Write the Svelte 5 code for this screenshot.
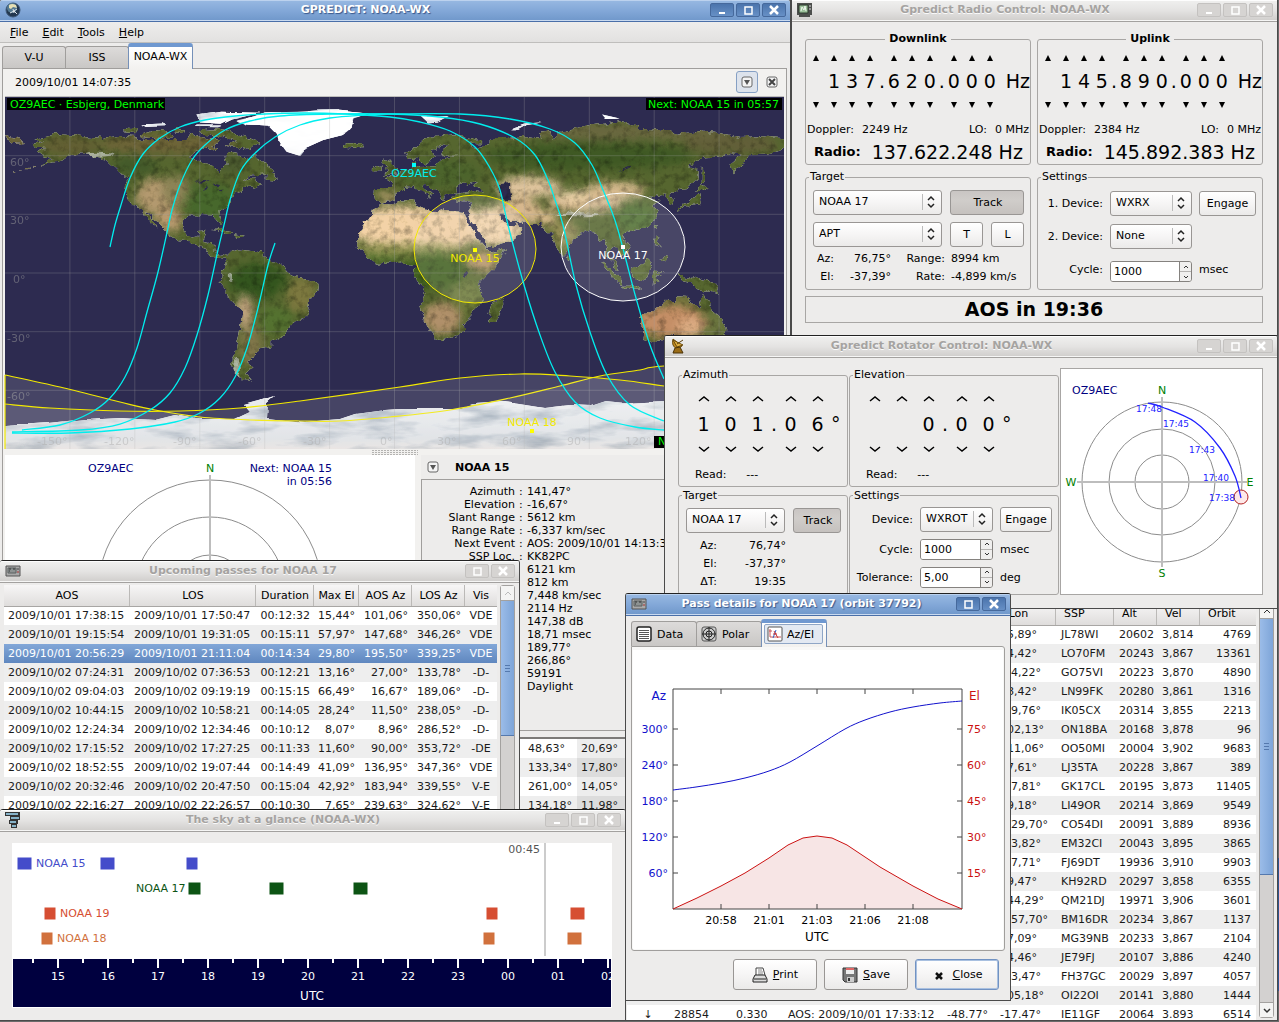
<script>
  // map canvas size, whole world in plain lat/lon projection
  const mapWidth = 779;
  const mapHeight = 352;

  const px = (lon) => Math.round((lon + 180) * (mapWidth / 360) * 10) / 10;
  const py = (lat) => Math.round((90 - lat) * (mapHeight / 180) * 10) / 10;

  const toPairs = (text) => text.trim().split(" ").map((p) => p.split(",").map(Number));

  const outline = (text) =>
    "M" + toPairs(text).map(([lon, lat]) => `${px(lon)} ${py(lat)}`).join("L") + "Z";

  // smooth line through all points
  const curve = (text) => {
    const p = toPairs(text);
    let d = `M${p[0][0]} ${p[0][1]}`;
    for (let i = 0; i < p.length - 1; i++) {
      const a = p[i - 1] || p[i];
      const b = p[i];
      const c = p[i + 1];
      const e = p[i + 2] || c;
      d += `C${b[0] + (c[0] - a[0]) / 6} ${b[1] + (c[1] - a[1]) / 6} `;
      d += `${c[0] - (e[0] - b[0]) / 6} ${c[1] - (e[1] - b[1]) / 6} ${c[0]} ${c[1]}`;
    }
    return d;
  };

  const land = [
    // north america
    "-168,66 -162,67 -166,68.5 -156,71 -150,70.5 -141,69.7 -135,69 -128,70 -120,69.5 -115,68 -108,68 -101,68 -96,68 -94,72 -90,69 -86,68 -81,69 -82,66 -87,64.5 -93,62 -95,59 -92,57 -85,55.5 -82,53 -80,51.2 -79,54 -77,56 -78,60 -77,62.4 -72,61.3 -70,58.5 -66,58.8 -64.5,60.3 -62,57 -57,54 -56,52 -60,50.2 -66,50 -70,47 -65,49 -64.5,46.5 -61,45.5 -66,43.6 -70,43.5 -70.5,41.7 -74,40.5 -76,37 -75.7,35.2 -78,34 -81,31.5 -80.2,27 -80.5,25.2 -82.5,28 -84,30 -89,30.2 -91,29 -95,29 -97.3,27 -97.7,22.5 -96,19 -94,18 -91,18.7 -90.5,21 -87,21.4 -88,17 -88.5,15.8 -83.2,15 -83.7,11 -82,9 -79.5,9.5 -77.4,8.6 -78,7.3 -80,7.4 -83,8.3 -85.8,10 -87.7,13 -92,14.5 -95,16 -100,17 -105,20 -105.5,22 -109,25.5 -112.5,29.5 -114.8,31.7 -114.5,30.5 -112,27.5 -109.5,23 -112,24.8 -115,28 -117,32.5 -120.5,34.5 -123.5,38.5 -124.3,42 -124,46.5 -123,49 -127.5,51.5 -130.5,55 -134,58.5 -140,60 -147,61 -151.5,59.5 -154,57.5 -158,56.5 -163,54.8 -158,58.5 -162,59 -165,61.5 -161,64 -166,64.6",
    "-117,71 -110,73 -105,72 -102,69.5 -110,68.7 -116,69.5",
    "-125,72 -123,74.3 -119,74 -120,71.6",
    "-90,73 -80,73.7 -72,71 -67,69 -62,66.5 -65,64.5 -67,62.8 -72,64.5 -78,65 -73,67.5 -80,70 -88,70.5",
    "-86,65.8 -81,64 -85,63.2",
    "-101,73.5 -97,73.5 -97,71.5 -101,72",
    "-59,51.5 -55.5,51 -53,47 -59,47.7",
    "-85,22 -80,23 -74.5,20.2 -77.5,20 -82,22.4",
    "-74,19.8 -69,19 -71,17.8 -74,18.3",
    // south america
    "-77.4,8.6 -75,11 -72,12 -68,11.5 -62,10.6 -57,6 -52,5 -50,0.5 -44,-2.5 -38,-4 -35,-6 -35.2,-9 -39,-14 -39.5,-20 -42,-23 -48,-26 -49,-29 -53.5,-34 -57,-35 -57,-38 -62,-39 -65,-42 -67,-46 -66,-48.5 -69,-51.5 -68,-53 -66,-55 -70,-55 -74,-51 -75.5,-47 -73.5,-41 -73,-37 -71.5,-30 -70.3,-19 -76,-14 -79,-8 -81,-5 -80,-3 -80,0 -77.5,4 -78,7.3",
    // africa
    "-6,35.8 -2,35 3,37 10,37.2 11,34 15,32.2 20,31 22,33 25,31.7 32,31.2 32.5,29.8 34,26.5 37,21.5 38,18 43,12 44.5,10.5 51,12 50.5,10 47,4 42,-1.5 39,-5 40.5,-11 40,-16 35,-20 35,-24 32.5,-26 32,-29 28,-33 22,-34.3 18.5,-34 18,-31.5 15,-27 13.5,-22 12,-17 13.8,-11 12,-5.5 9,-1 9.7,3.5 6,4.3 4,6.3 -2,5 -8,4.4 -13,8.5 -16.5,12.5 -17.3,14.7 -16.3,20 -14,26 -10,29.5 -9.5,32.5",
    "49.3,-12 50.3,-16 47,-25 44,-25 43.5,-21.5 44.5,-16.5 47,-15",
    // europe and asia
    "-9,43.5 -1.5,43.5 -1,46 -4.5,48.3 -1.5,49.5 3,51 5,53 8.5,54 8.2,57 10.5,57.5 10,55 12,54.2 19,54.4 21.5,57.5 24,59 30,60 23,60 21.5,62 25,65 22,65.8 17.5,62 18.5,60 16.5,57 14.5,55.6 12.5,56.5 11,59 7,58 5,61 10,64 14,68 20,70 28,71 33,69.5 41,67.5 40,66.2 34,66.7 37,64 44,66 44,68.5 53,68.5 60,69.5 68,68.5 67,72 72,73 73,68 76,72 80,73 87,75 98,76.5 105,77.7 113,75.5 113,73.7 127,73 130,71 140,72.5 150,71.5 160,69.5 170,69.8 182,68.8 182,65 178,62.5 170,60 163.5,59.8 162,56 156.7,51 155.8,56.5 160,60.5 156,61.7 150,59.5 142,59 135.5,54.7 140.5,53 140.5,48 135,43.3 131,43 127.7,40 129.3,36.5 126.5,34.5 126.5,37.5 125,39.7 121.5,39 121.5,40.8 118,39 122,37 119.5,35 121.5,32 121.8,29 119,25.5 114,22.3 110,21 108,21.5 105.8,19 109,13 107,10.5 105,8.7 104.8,10.5 102.3,12.3 100.8,13.3 99.3,10 100.5,7 103.3,3.5 104,1.4 101.5,2.8 100,6.5 98.5,9 98.5,13 97.3,17 94.3,16 94,19 91.5,22.7 88,21.8 86.5,20 82,16.5 80.2,15 80,12 79.5,10.3 77.5,8 76,11 74.5,14.5 72.8,19 72.5,21 70.5,20.8 69,22.5 67,25 61.5,25.1 57,26.8 54,26.6 50.5,30 48,30 50,27 51.5,25 54.3,24.2 56.3,26 56.8,24 59.8,22.4 57.5,19 55,17 52,15.6 45,12.8 43,13 42.5,16.5 39,21.5 35,28 34.5,29.5 34.3,31.4 36,36.2 32,36.2 28,36.7 26.5,39.2 29,41 35,42 41.5,41.3 37,45 39,47 35.5,46.3 33,44.6 33,46.2 30.7,46.3 28,43.5 28.5,41.3 24,40.8 22.7,39.5 24,38 22.5,36.5 21,38.5 19.4,41.8 15,44.5 13.5,45.6 12.4,44.5 14,42.5 18.3,40 16.5,39.7 16,38 15.5,40 12,42 9,44.3 6,43.2 3,43 0,39.8 -0.5,38 -2,36.8 -5.5,36.1 -9,37 -9.3,39",
    "-24,65.5 -22,66.3 -16,66.3 -14,65 -18.5,63.5 -22.5,64",
    "-5,58.5 -2,57.5 0,53 1.5,52.5 1,51 -5,50 -3,51.5 -4.5,53 -3,54.5 -5.5,56",
    "-10,52 -6,52 -6,54.5 -8,55.2 -10,54",
    "130,31.5 131,34 136,35.7 140,40 141.3,41.3 142,39.5 140.8,35.7 137,34.6 135.5,33.6 132,33.5",
    "140,42 141.8,45.3 145,43.8 143,42",
    "142,46 142,54 143.5,51 143.5,47",
    "80,9.5 81.8,7 80.5,6 79.8,7.5",
    "95.5,5.5 98,4 104,-2 106,-5.8 102,-4 98.5,1.5",
    "105.5,-6.5 111,-6.5 114.5,-8 110,-8 106,-7.4",
    "109,1.5 113,3 117,7 119,5 117.7,1 116,-3.8 113,-3.3 110,-1.5",
    "119.5,-5.5 119,-2 120,1 125,1.5 121,0.3 123,-1 121.5,-2 122.5,-5 120.5,-3",
    "120.5,18.5 122,18 121.5,14 124,12.6 121,13.6 120,16",
    "122,7 125.5,9.7 126.4,7 125,6",
    "120.3,23.5 121.7,25 121,22",
    "131,-1 134,-1 135,-3.3 138,-1.8 144.5,-3.8 148,-6.5 150.5,-10.5 146.5,-9 143,-9 139,-8 137.7,-5.3 133,-4",
    "114,-22 114,-26 115.5,-31 115,-34.2 118,-35 124,-33.7 129,-31.6 134,-32.8 136,-34.8 138,-33 138.3,-35.5 140.5,-38 146.5,-39 150,-37.3 153,-32 153.4,-28 150.8,-23.3 146.3,-19 145.3,-15 142.5,-10.7 141.5,-14 140.8,-17.5 137,-16 135.7,-12.2 131,-12 129.5,-15 126,-14 122,-18 117,-20.7",
  ].map(outline);

  const ice = [
    "-73,78 -68,76 -58,75.5 -54,71 -53,67 -50,62 -44,60 -41,64 -33,68 -24,70.5 -20,74 -19,79 -12,81.5 -30,83.5 -45,82.5 -60,82 -65,80",
    "-90,77 -92,81 -80,83 -62,82.5 -75,79 -80,76.3",
    "-92,75.5 -80,75.5 -82,74.5 -92,74.8",
    "-117,76 -107,76.5 -106,75 -115,74.8",
    "12,80 25,80.3 20,77.5 15,77",
    "54,73 56,73 60,75.5 68,77 60,76.4 55,74.4",
    "96,81 104,79 98,78.5",
  ].map(outline);

  const lakes = [
    "49,46 53,46.5 53,42 54,37 50,37.5 49.5,41 47.5,43",
    "-92,46.8 -88,48.5 -85,46.6",
    "-88,42 -87,45.5 -86,43",
    "-84,45.8 -80.5,45 -82,43.2",
    "-83,41.6 -79,42.8 -80,42",
    "32,0.5 34,0.3 33.5,-2.5 32,-2",
    "104,51.8 109,55 108,53",
  ].map(outline);

  // lon, lat, half width and half height in degrees, colour
  const terrain = [
    [-105, 66, 32, 5, "#6d6438"],
    [-150, 65, 14, 5, "#625f33"],
    [-85, 36, 12, 10, "#47682c"],
    [-110, 39, 9, 9, "#b3996f"],
    [-104, 27, 6, 6, "#b89a70"],
    [-101, 42, 6, 8, "#8d8457"],
    [-120, 55, 10, 5, "#435a2a"],
    [-75, 56, 8, 5, "#4c5c30"],
    [-63, -4, 13, 9, "#33551e"],
    [-43, -11, 7, 9, "#7c783f"],
    [-55, -24, 8, 7, "#547230"],
    [-69, -20, 3, 9, "#cba987"],
    [-66, -37, 5, 10, "#80764a"],
    [5, 24, 28, 10, "#f3d2a7"],
    [27, 24, 15, 10, "#f0cea3"],
    [5, 12, 28, 3, "#8f9150"],
    [18, 1, 15, 9, "#41601f"],
    [-6, 7, 10, 2, "#4f702c"],
    [22, -23, 9, 8, "#b0906a"],
    [41, 6, 7, 5, "#b8956a"],
    [34, -12, 7, 8, "#6d7a3a"],
    [47, 24, 13, 10, "#f2d3ac"],
    [58, 32, 9, 7, "#d8b88e"],
    [62, 44, 15, 5, "#dfc49e"],
    [88, 36, 17, 5, "#d0b48c"],
    [102, 42, 14, 4, "#d8bb90"],
    [83, 39, 8, 3, "#efd4ac"],
    [70, 28, 5, 4, "#debe90"],
    [79, 20, 6, 7, "#968e56"],
    [90, 60, 48, 7, "#3f5924"],
    [100, 72, 55, 4, "#6a6840"],
    [155, 66, 22, 5, "#625f39"],
    [112, 28, 10, 7, "#507032"],
    [20, 51, 20, 7, "#4c642c"],
    [-3, 39, 5, 3, "#a09060"],
    [128, -25, 16, 8, "#c48e66"],
    [137, -28, 6, 5, "#dcac84"],
    [149, -28, 4, 9, "#6c7640"],
    [133, -14, 8, 2, "#827a44"],
  ];

  const snow = [
    [-137, 60.5, 7, 1, "#dfe3e6"],
    [-73, -48, 1.5, 5, "#e6eaee"],
    [-76, -2, 1, 2, "#dfe3e6"],
    [85, 30, 10, 1, "#e6e6e6"],
  ];

  const tracks = [
    "105,150 110,128 116,108 125,81 138,57 155,41 175,30 200,23 230,19 260,17 300,16 340,17 385,20 415,25 445,34 470,50 485,71 495,93 503,128 519,188 535,238 550,275 570,305 595,321 630,330 659,333",
    "17,333 55,328 85,316 105,301 120,280 132,251 142,215 153,175 163,131 167,113 175,88 187,63 200,48 220,33 245,24 275,19 325,17 385,17 435,20 475,27 510,41 530,58 543,83 550,103 558,128 571,188 585,235 602,278 625,308 659,324",
    "7,335 75,333 115,327 145,313 165,296 180,271 192,238 203,198 213,153 219,128 225,103 235,75 248,58 270,40 295,28 325,21 360,18 385,17 455,17 505,22 545,32 570,46 587,68 598,93 607,115 613,133 621,163 631,201 645,248 659,282",
    "7,336 65,336 125,332 170,325 195,316 215,301 230,280 242,251 253,211 263,168 270,146",
  ].map(curve);

  const footprints = [
    "0,278 55,290 115,305 150,313 195,320 245,323 295,324 335,324 385,320 445,313 505,301 555,289 595,279 635,273 659,269 779,262",
    "0,307 45,311 115,314 175,314 235,311 295,304 395,290 455,281 515,277 565,279 615,283 659,289 779,307",
  ].map(curve);

  const meridians = [-150, -120, -90, -60, -30, 0, 30, 60, 90, 120, 150];
  const parallels = [60, 30, 0, -30, -60];

  const satInfo = [
    ["Azimuth", "141,47°"],
    ["Elevation", "-16,67°"],
    ["Slant Range", "5612 km"],
    ["Range Rate", "-6,337 km/sec"],
    ["Next Event", "AOS: 2009/10/01 14:13:32"],
    ["SSP Loc.", "KK82PC"],
    ["", "6121 km"],
    ["", "812 km"],
    ["", "7,448 km/sec"],
    ["", "2114 Hz"],
    ["", "147,38 dB"],
    ["", "18,71 msec"],
    ["", "189,77°"],
    ["", "266,86°"],
    ["", "59191"],
    ["", "Daylight"],
  ];

  const azel = [
    ["48,63°", "20,69°"],
    ["133,34°", "17,80°"],
    ["261,00°", "14,05°"],
    ["134,18°", "11,98°"],
  ];

  const passes = [
    ["2009/10/01 17:38:15", "2009/10/01 17:50:47", "00:12:32", "15,44°", "101,06°", "350,06°", "VDE"],
    ["2009/10/01 19:15:54", "2009/10/01 19:31:05", "00:15:11", "57,97°", "147,68°", "346,26°", "VDE"],
    ["2009/10/01 20:56:29", "2009/10/01 21:11:04", "00:14:34", "29,80°", "195,50°", "339,25°", "VDE"],
    ["2009/10/02 07:24:31", "2009/10/02 07:36:53", "00:12:21", "13,16°", "27,00°", "133,78°", "-D-"],
    ["2009/10/02 09:04:03", "2009/10/02 09:19:19", "00:15:15", "66,49°", "16,67°", "189,06°", "-D-"],
    ["2009/10/02 10:44:15", "2009/10/02 10:58:21", "00:14:05", "28,24°", "11,50°", "238,05°", "-D-"],
    ["2009/10/02 12:24:34", "2009/10/02 12:34:46", "00:10:12", "8,07°", "8,96°", "286,52°", "-D-"],
    ["2009/10/02 17:15:52", "2009/10/02 17:27:25", "00:11:33", "11,60°", "90,00°", "353,72°", "-DE"],
    ["2009/10/02 18:52:55", "2009/10/02 19:07:44", "00:14:49", "41,09°", "136,95°", "347,36°", "VDE"],
    ["2009/10/02 20:32:46", "2009/10/02 20:47:50", "00:15:04", "42,92°", "183,94°", "339,55°", "V-E"],
    ["2009/10/02 22:16:27", "2009/10/02 22:26:57", "00:10:30", "7,65°", "239,63°", "324,62°", "V-E"],
  ];
  let selectedPass = 2;

  const satellites = [
    ["", "", "", "", "", "15,89°", "JL78WI", "20602", "3,814", "4769"],
    ["", "", "", "", "", "54,42°", "LO70FM", "20243", "3,867", "13361"],
    ["", "", "", "", "", "-44,22°", "GO75VI", "20223", "3,870", "4890"],
    ["", "", "", "", "", "58,42°", "LN99FK", "20280", "3,861", "1316"],
    ["", "", "", "", "", "-19,76°", "IK05CX", "20314", "3,855", "2213"],
    ["", "", "", "", "", "102,13°", "ON18BA", "20168", "3,878", "96"],
    ["", "", "", "", "", "111,06°", "OO50MI", "20004", "3,902", "9683"],
    ["", "", "", "", "", "47,61°", "LJ35TA", "20228", "3,867", "389"],
    ["", "", "", "", "", "-57,81°", "GK17CL", "20195", "3,873", "11405"],
    ["", "", "", "", "", "49,18°", "LI49OR", "20214", "3,869", "9549"],
    ["", "", "", "", "", "-129,70°", "CO54DI", "20091", "3,889", "8936"],
    ["", "", "", "", "", "-93,82°", "EM32CI", "20043", "3,895", "3865"],
    ["", "", "", "", "", "-67,71°", "FJ69DT", "19936", "3,910", "9903"],
    ["", "", "", "", "", "39,47°", "KH92RD", "20297", "3,858", "6355"],
    ["", "", "", "", "", "144,29°", "QM21DJ", "19971", "3,906", "3601"],
    ["", "", "", "", "", "-157,70°", "BM16DR", "20234", "3,867", "1137"],
    ["", "", "", "", "", "67,09°", "MG39NB", "20233", "3,867", "2104"],
    ["", "", "", "", "", "14,46°", "JE79FJ", "20107", "3,886", "4240"],
    ["", "", "", "", "", "-73,47°", "FH37GC", "20029", "3,897", "4057"],
    ["", "", "", "", "", "105,18°", "OI22OI", "20141", "3,880", "1444"],
    ["↓", "28854", "0.330", "AOS: 2009/10/01 17:33:12", "-48.77°", "-17.47°", "IE11GF", "20064", "3.893", "6514"],
  ];

  const links = [
    { name: "Downlink", digits: " 137.620.000", doppler: "2249 Hz", radio: "137.622.248 Hz" },
    { name: "Uplink", digits: " 145.890.000", doppler: "2384 Hz", radio: "145.892.383 Hz" },
  ];

  const axes = [
    { name: "Azimuth", digits: "101.06" },
    { name: "Elevation", digits: "  0.00" },
  ];

  // sky at a glance, x positions on a 600 wide canvas
  const sky = [
    { name: "NOAA 15", color: "#444cca", y: 14, label: 24, bars: [[6, 13], [89, 13], [175, 10]] },
    { name: "NOAA 17", color: "#0d5414", y: 39, label: 124, bars: [[177, 11], [258, 13], [342, 13]] },
    { name: "NOAA 19", color: "#d64e32", y: 64, label: 48, bars: [[33, 10], [475, 10], [559, 13]] },
    { name: "NOAA 18", color: "#d1713d", y: 89, label: 45, bars: [[30, 10], [472, 10], [556, 13]] },
  ];
  const hours = ["15", "16", "17", "18", "19", "20", "21", "22", "23", "00", "01", "02"];

  const menus = ["File", "Edit", "Tools", "Help"];
  let modules = ["V-U", "ISS", "NOAA-WX"];
  let activeModule = "NOAA-WX";
  let detailTab = "Az/El";
</script>

{#snippet titlebar(title, icon, buttons, active)}
  <header class="titlebar" class:active>
    <svg class="app-icon" viewBox="0 0 16 16">
      {#if icon === "globe"}
        <circle cx="8" cy="8" r="7" fill="#23384f" stroke="#3d5878" />
        <circle cx="7" cy="6" r="5" fill="#557a92" />
        <path d="M4 3Q7 1 11 3L12 6L8 5L6 7L4 6Z" fill="#e6e0b4" />
        <path d="M8 7l1 4M5 11l4-2 3 3M9 9l3-2" fill="none" stroke="#dfe6ea" />
      {:else if icon === "radio"}
        <path d="M0 1h15v12h-2v2H2v-2H0z" fill="#4d4f4c" />
        <path d="M2 3h9v8H2z" fill="#9cc19a" stroke="#2c3a2c" />
        <path d="M4 9l1-4 2 3 1-4 1 5" fill="none" stroke="#eef6ec" />
        <path d="M12 4h2M12 7h2" stroke="#ddd" />
      {:else if icon === "dish"}
        <path d="M3 1Q1 8 7 11L12 8Z" fill="#c08a1e" stroke="#6b4a0c" />
        <path d="M3 2L13 7L7 9Z" fill="#e0b040" stroke="#6b4a0c" />
        <path d="M5 10l-2 5h10l-3-6z" fill="#9a6c16" stroke="#4a3208" />
        <path d="M7 6l6-4" stroke="#5c400c" />
      {:else if icon === "sky"}
        <path d="M0 2h15M5 6h10M4 10h9M6 14h6" stroke="#333" stroke-width="4" />
        <path d="M1 2h12M6 6h8M5 10h6M7 14h4" stroke="#86b2c8" stroke-width="2" />
      {:else}
        <path d="M1 3h14v10H1z" fill="#a9a9a9" stroke="#555" />
        <path d="M3 5h8v5H3z" fill="#8d9292" stroke="#5b6060" />
        <path d="M4 6h2M8 6h2M4 8h1" fill="none" stroke="#333" />
        <path d="M12 6h2" stroke="#444" />
        <path d="M12 9h2" stroke="#a33" />
      {/if}
    </svg>
    <h1>{title}</h1>
    <div class="controls">
      {#if buttons === 3}
        <button type="button" aria-label="Minimize {title}">
          <svg viewBox="0 0 10 10"><path d="M2 8h6" stroke-width="2" /></svg>
        </button>
      {/if}
      <button type="button" aria-label="Maximize {title}">
        <svg viewBox="0 0 10 10"><path d="M2 2h7v7H2z" stroke-width="1.5" /></svg>
      </button>
      <button type="button" aria-label="Close {title}">
        <svg viewBox="0 0 10 10"><path d="M1 1l8 8M9 1l-8 8" stroke-width="2.5" /></svg>
      </button>
    </div>
  </header>
{/snippet}

{#snippet combo(id, value, label)}
  <span class="combo">
    <select {id} aria-label={label}>
      <option>{value}</option>
    </select>
    <svg viewBox="0 0 8 12"><path d="M1 4l3-3 3 3M1 8l3 3 3-3" stroke-width="1.5" /></svg>
  </span>
{/snippet}

{#snippet spin(id, value)}
  <span class="spin">
    <input {id} type="text" {value} />
    <span class="steps">
      <button type="button" aria-label="Increase {id}"><svg viewBox="0 0 6 4"><path d="M1 3l2-2 2 2" /></svg></button>
      <button type="button" aria-label="Decrease {id}"><svg viewBox="0 0 6 4"><path d="M1 1l2 2 2-2" /></svg></button>
    </span>
  </span>
{/snippet}

{#snippet dial(digits, name)}
  {#each digits.split("") as digit, i}
    {#if digit === "."}
      <span class="dot">.</span>
    {:else}
      <span class="cell">
        <button type="button" aria-label="{name} digit {i} up">
          <svg viewBox="0 0 12 12">
            <path class="solid" d="M3 9L6 3L9 9Z" />
            <path class="open" d="M1 8L6 4L11 8" />
          </svg>
        </button>
        <b>{digit}</b>
        <button type="button" aria-label="{name} digit {i} down">
          <svg viewBox="0 0 12 12">
            <path class="solid" d="M3 3L6 9L9 3Z" />
            <path class="open" d="M1 4L6 8L11 4" />
          </svg>
        </button>
      </span>
    {/if}
  {/each}
{/snippet}

<main class="desktop">
  <section class="window main-window">
    {@render titlebar("GPREDICT: NOAA-WX", "globe", 3, true)}
    <nav class="menubar">
      {#each menus as menu}
        <button type="button"><u>{menu[0]}</u>{menu.slice(1)}</button>
      {/each}
    </nav>
    <div class="tabs module-tabs">
      {#each modules as name}
        <button type="button" class:current={name === activeModule} on:click={() => (activeModule = name)}>{name}</button>
      {/each}
    </div>
    <div class="page">
      <div class="toolbar">
        <time>2009/10/01 14:07:35</time>
        <button type="button" class="hot" aria-label="Module options">
          <svg viewBox="0 0 12 12"><rect x="1" y="1" width="10" height="10" rx="2" /><path class="mark" d="M3 4h6L6 9Z" /></svg>
        </button>
        <button type="button" aria-label="Close module">
          <svg viewBox="0 0 12 12"><rect x="1" y="1" width="10" height="10" rx="2" /><path class="cross" d="M3 3l6 6M9 3l-6 6" /></svg>
        </button>
      </div>

      <svg class="map" viewBox="0 0 {mapWidth} {mapHeight}">
        <defs>
          <clipPath id="land-clip">
            {#each land as d}<path {d} />{/each}
          </clipPath>
          <clipPath id="map-clip"><rect width="779" height="352" /></clipPath>
          <filter id="soft" color-interpolation-filters="sRGB"><feGaussianBlur stdDeviation="4" /></filter>
          <filter id="relief" x="0" y="0" width="100%" height="100%" color-interpolation-filters="sRGB">
            <feTurbulence type="fractalNoise" baseFrequency="0.13" numOctaves="4" seed="4" result="noise" />
            <feDisplacementMap in="SourceGraphic" in2="noise" scale="7" xChannelSelector="R" yChannelSelector="G" result="coast" />
            <feColorMatrix in="noise" type="matrix" values="0.7 0 0 0 0.62 0.7 0 0 0 0.62 0.7 0 0 0 0.6 0 0 0 0 1" result="shade" />
            <feComposite in="shade" in2="coast" operator="in" result="mask" />
            <feBlend in="mask" in2="coast" mode="multiply" />
          </filter>
          <filter id="drift" x="0" y="0" width="100%" height="100%" color-interpolation-filters="sRGB">
            <feTurbulence type="fractalNoise" baseFrequency="0.02 0.08" numOctaves="4" seed="9" result="noise" />
            <feDisplacementMap in="SourceGraphic" in2="noise" scale="5" xChannelSelector="R" yChannelSelector="G" result="coast" />
            <feColorMatrix in="noise" type="matrix" values="0.7 0 0 0 0.6 0.6 0 0 0 0.66 0.5 0 0 0 0.72 0 0 0 0 1" result="shade" />
            <feComposite in="shade" in2="coast" operator="in" result="mask" />
            <feBlend in="mask" in2="coast" mode="multiply" />
          </filter>
          <linearGradient id="shelf" x1="0" y1="0" x2="0" y2="1">
            <stop offset="0" stop-color="#eceef0" />
            <stop offset="0.6" stop-color="#dadde1" />
            <stop offset="0.85" stop-color="#ebe1da" />
          </linearGradient>
        </defs>
        <rect width="779" height="352" fill="#2d2b50" />
        <g clip-path="url(#map-clip)">
          <g filter="url(#relief)">
            <g clip-path="url(#land-clip)">
              <rect width="790" height="300" fill="#56662f" />
              <g filter="url(#soft)">
                {#each terrain as [lon, lat, w, h, color]}
                  <ellipse cx={px(lon)} cy={py(lat)} rx={w * 2.2} ry={h * 2} fill={color} />
                {/each}
              </g>
              {#each snow as [lon, lat, w, h, color]}
                <ellipse cx={px(lon)} cy={py(lat)} rx={w * 2.2} ry={h * 2} fill={color} opacity="0.6" />
              {/each}
            </g>
            {#each lakes as d}<path {d} fill="#2d2b50" />{/each}
            <path d="M0 38L12 41L20 46L6 47Z" fill="#6a6338" />
            <path d="M8 74Q40 70 58 58" fill="none" stroke="#6a6338" stroke-width="1" stroke-dasharray="3 4" />
          </g>
          <g filter="url(#drift)">
            <path
              fill="url(#shelf)"
              d="M-20 329L0 329L43 326L80 322L115 320L150 322L170 317L190 321L230 321L245 314L240 308L258 303L270 299L262 306L261 321L300 325L335 322L350 317L380 313L395 312L455 312L470 307L500 305L515 307L540 311L565 308L585 309L600 304L620 306L659 304L800 306V370H-20Z"
            />
          </g>
          <g filter="url(#drift)">
            {#each ice as d}<path {d} fill="#fff" />{/each}
          </g>
          {#each ice.slice(0, 1) as d}<path {d} fill="#fff" opacity="0.9" />{/each}
        </g>

        <g class="grid">
          {#each meridians as lon}<path d="M{px(lon)} 0V352" />{/each}
          {#each parallels as lat}<path d="M0 {py(lat)}H779" />{/each}
        </g>
        <g class="grid-labels">
          <text x="5" y="69">60°</text>
          <text x="5" y="127">30°</text>
          <text x="8" y="186">0°</text>
          <text x="2" y="245">-30°</text>
          <text x="2" y="303">-60°</text>
          <text x="32" y="348">-150°</text>
          <text x="99" y="348">-120°</text>
          <text x="168" y="348">-90°</text>
          <text x="233" y="348">-60°</text>
          <text x="298" y="348">-30°</text>
          <text x="375" y="348">0°</text>
          <text x="432" y="348">30°</text>
          <text x="497" y="348">60°</text>
          <text x="562" y="348">90°</text>
          <text x="620" y="348">120°</text>
        </g>

        {#each footprints as d}
          <path d="{d}V352H0Z" fill="#fff" opacity="0.12" />
          <path {d} class="footprint" />
        {/each}
        <path d="M0 278V352" class="footprint" />
        <ellipse cx="470" cy="152" rx="61" ry="54" fill="#fff" fill-opacity="0.13" stroke="#f2e900" />
        <ellipse cx="618" cy="150" rx="62" ry="54" fill="#fff" fill-opacity="0.13" stroke="#fff" />
        {#each tracks as d}<path {d} class="track" />{/each}

        <g text-anchor="middle">
          <rect x="407" y="66" width="4" height="4" fill="#0ff" />
          <text x="409" y="80" fill="#0ee">OZ9AEC</text>
          <rect x="468" y="151" width="4" height="4" fill="#ff0" />
          <text x="470" y="165" fill="#f2e900">NOAA 15</text>
          <rect x="616" y="148" width="4" height="4" fill="#fff" />
          <text x="618" y="162" fill="#fff">NOAA 17</text>
          <rect x="525" y="332" width="4" height="4" fill="#ff0" />
          <text x="527" y="329" fill="#f2e900">NOAA 18</text>
        </g>
        <rect x="2" y="1" width="158" height="12" />
        <text x="5" y="11" fill="#0f0">OZ9AEC · Esbjerg, Denmark</text>
        <rect x="641" y="1" width="136" height="12" />
        <text x="774" y="11" fill="#0f0" text-anchor="end">Next: NOAA 15 in 05:57</text>
        <rect x="649" y="339" width="128" height="12" />
        <text x="653" y="348" fill="#0f0">N</text>
      </svg>

      <div class="gutter"><i></i></div>

      <div class="lower">
        <svg class="polar" viewBox="0 0 410 280">
          <g class="rings">
            <circle cx="205" cy="137" r="112" />
            <circle cx="205" cy="137" r="75" />
            <circle cx="205" cy="137" r="37" />
            <path d="M205 20V255M88 137H322" />
          </g>
          <text x="83" y="17" class="navy">OZ9AEC</text>
          <text x="205" y="17" class="compass">N</text>
          <text x="327" y="17" class="navy" text-anchor="end">Next: NOAA 15</text>
          <text x="327" y="30" class="navy" text-anchor="end">in 05:56</text>
        </svg>
        <div class="single">
          <div class="single-head">
            <button type="button" aria-label="Satellite options">
              <svg viewBox="0 0 12 12"><rect x="1" y="1" width="10" height="10" rx="2" /><path class="mark" d="M3 4h6L6 9Z" /></svg>
            </button>
            <strong>NOAA 15</strong>
          </div>
          <dl>
            {#each satInfo as [name, value]}
              <dt>{name}</dt>
              <dd class:named={name}>{value}</dd>
            {/each}
          </dl>
          <div class="azel">
            <table>
              <tbody>
                {#each azel as [az, el]}
                  <tr><td class="blank"></td><td class="az">{az}</td><td class="sorted">{el}</td></tr>
                {/each}
              </tbody>
            </table>
          </div>
        </div>
      </div>
    </div>
  </section>

  <section class="window list-window">
    <div class="scroller">
      <table class="list sat-list">
        <colgroup>
          <col class="w-dir" /><col class="w-num" /><col class="w-mag" /><col class="w-event" /><col class="w-lat" />
          <col class="w-lon" /><col class="w-ssp" /><col class="w-alt" /><col class="w-alt" /><col />
        </colgroup>
        <thead>
          <tr>
            <th></th><th></th><th></th><th></th><th></th><th>Lon</th><th>SSP</th><th>Alt</th><th>Vel</th><th>Orbit</th>
          </tr>
        </thead>
        <tbody>
          {#each satellites as row}
            <tr>{#each row as cell}<td>{cell}</td>{/each}</tr>
          {/each}
        </tbody>
      </table>
      <div class="scrollbar">
        <span class="arrow"><svg viewBox="0 0 8 8"><path d="M1 6l3-3 3 3" /></svg></span>
        <span class="thumb"><i></i></span>
        <span class="trough"></span>
        <span class="arrow last"><svg viewBox="0 0 8 8"><path d="M1 3l3 3 3-3" stroke-width="1.5" /></svg></span>
      </div>
    </div>
  </section>

  <section class="window radio-window">
    {@render titlebar("Gpredict Radio Control: NOAA-WX", "radio", 3, false)}
    <div class="radio-body">
      {#each links as link}
        <fieldset class="link">
          <legend class="middle">{link.name}</legend>
          <div class="dial">{@render dial(link.digits, link.name)}<span class="unit">Hz</span></div>
          <div class="doppler"><span>Doppler:</span><span>{link.doppler}</span><span class="lo">LO:</span><span>0 MHz</span></div>
          <div class="tuned"><strong>Radio:</strong><output>{link.radio}</output></div>
        </fieldset>
      {/each}

      <fieldset>
        <legend>Target</legend>
        <div class="target">
          {@render combo("radio-sat", "NOAA 17", "Satellite")}
          <button type="button" class="btn pressed wide">Track</button>
          {@render combo("radio-trsp", "APT", "Transponder")}
          <button type="button" class="btn">T</button>
          <button type="button" class="btn">L</button>
        </div>
        <div class="readout">
          <span>Az:</span><span>76,75°</span><span>Range:</span><span>8994 km</span>
          <span>El:</span><span>-37,39°</span><span>Rate:</span><span>-4,899 km/s</span>
        </div>
      </fieldset>

      <fieldset>
        <legend>Settings</legend>
        <div class="settings">
          <label for="radio-1">1. Device:</label>
          {@render combo("radio-1", "WXRX", undefined)}
          <button type="button" class="btn">Engage</button>
          <label for="radio-2">2. Device:</label>
          {@render combo("radio-2", "None", undefined)}
          <span></span>
          <label for="radio-cycle">Cycle:</label>
          {@render spin("radio-cycle", "1000")}
          <span>msec</span>
        </div>
      </fieldset>
      <p class="status">AOS in 19:36</p>
    </div>
  </section>

  <section class="window rotator-window">
    {@render titlebar("Gpredict Rotator Control: NOAA-WX", "dish", 3, false)}
    <div class="rotator-body">
      {#each axes as axis}
        <fieldset class="axis">
          <legend>{axis.name}</legend>
          <div class="dial">{@render dial(axis.digits, axis.name)}<span class="unit">°</span></div>
          <div class="read"><span>Read:</span><span>---</span></div>
        </fieldset>
      {/each}

      <fieldset>
        <legend>Target</legend>
        <div class="rot-target">
          {@render combo("rot-sat", "NOAA 17", "Satellite")}
          <button type="button" class="btn pressed">Track</button>
        </div>
        <div class="rot-readout">
          <span>Az:</span><span>76,74°</span>
          <span>El:</span><span>-37,37°</span>
          <span>ΔT:</span><span>19:35</span>
        </div>
      </fieldset>

      <fieldset>
        <legend>Settings</legend>
        <div class="rot-settings">
          <label for="rot-device">Device:</label>
          {@render combo("rot-device", "WXROT", undefined)}
          <button type="button" class="btn">Engage</button>
          <label for="rot-cycle">Cycle:</label>
          {@render spin("rot-cycle", "1000")}
          <span>msec</span>
          <label for="rot-tolerance">Tolerance:</label>
          {@render spin("rot-tolerance", "5,00")}
          <span>deg</span>
        </div>
      </fieldset>

      <svg class="rot-polar" viewBox="0 0 201 225">
        <g class="rings">
          <circle cx="101" cy="113" r="80" />
          <circle cx="101" cy="113" r="53" />
          <circle cx="101" cy="113" r="27" />
          <path d="M101 28V198M16 113H186" />
        </g>
        <text x="11" y="25" class="navy">OZ9AEC</text>
        <g class="compass">
          <text x="101" y="25">N</text>
          <text x="101" y="208">S</text>
          <text x="10" y="117">W</text>
          <text x="189" y="117">E</text>
        </g>
        <circle cx="180" cy="128" r="7" fill="#fee8e8" stroke="#b32424" />
        <path d={curve("87,34 101,38 134,53 159,79 174,107 180,129")} fill="none" stroke="#22f" stroke-width="1.3" />
        <g class="times">
          <text x="88" y="43">17:48</text>
          <text x="115" y="58">17:45</text>
          <text x="141" y="84">17:43</text>
          <text x="155" y="112">17:40</text>
          <text x="161" y="132">17:38</text>
        </g>
      </svg>
    </div>
  </section>

  <section class="window passes-window">
    {@render titlebar("Upcoming passes for NOAA 17", "module", 2, false)}
    <div class="scroller">
      <table class="list pass-list">
        <colgroup>
          <col class="p-date" /><col class="p-date" /><col class="p-dur" /><col class="p-max" />
          <col class="p-az" /><col class="p-az" /><col />
        </colgroup>
        <thead>
          <tr><th>AOS</th><th>LOS</th><th>Duration</th><th>Max El</th><th>AOS Az</th><th>LOS Az</th><th>Vis</th></tr>
        </thead>
        <tbody>
          {#each passes as row, i}
            <tr class:selected={i === selectedPass} on:click={() => (selectedPass = i)}>
              {#each row as cell}<td>{cell}</td>{/each}
            </tr>
          {/each}
        </tbody>
      </table>
      <div class="scrollbar">
        <span class="arrow dim"><svg viewBox="0 0 8 8"><path d="M1 6l3-3 3 3" /></svg></span>
        <span class="thumb"><i></i></span>
        <span class="trough"></span>
      </div>
    </div>
  </section>

  <section class="window sky-window">
    {@render titlebar("The sky at a glance (NOAA-WX)", "sky", 3, false)}
    <svg class="sky" viewBox="0 0 600 165">
      <rect width="600" height="165" fill="#fff" />
      {#each sky as sat}
        {#each sat.bars as [x, w]}
          <rect {x} y={sat.y + 1} width={w} height="11" fill={sat.color} stroke={sat.color} />
        {/each}
        <text x={sat.label} y={sat.y + 10} fill={sat.color}>{sat.name}</text>
      {/each}
      <path d="M533 0V113" stroke="#999" />
      <text x="528" y="10" fill="#555" text-anchor="end">00:45</text>
      <rect x="1" y="116" width="598" height="48" fill="#00003f" />
      {#each hours as hour, i}
        <path d="M{46 + i * 50} 116v9M{21 + i * 50} 116v4" stroke="#fff" stroke-width="2" />
        <text x={46 + i * 50} y="137" fill="#fff" text-anchor="middle">{hour}</text>
      {/each}
      <text x="300" y="157" class="utc" fill="#fff" text-anchor="middle">UTC</text>
    </svg>
  </section>

  <section class="window details-window">
    {@render titlebar("Pass details for NOAA 17 (orbit 37792)", "module", 2, true)}
    <div class="tabs detail-tabs">
      <button type="button" class:current={detailTab === "Data"} on:click={() => (detailTab = "Data")}>
        <span>
          <svg viewBox="0 0 16 16"><rect x="1" y="1" width="14" height="14" rx="2" fill="#fff" stroke="#222" stroke-width="1.5" /><path d="M3 4.5h10M3 6.5h10M3 8.5h10M3 10.5h10M3 12.5h10" stroke="#555" /></svg>
          Data
        </span>
      </button>
      <button type="button" class:current={detailTab === "Polar"} on:click={() => (detailTab = "Polar")}>
        <span>
          <svg viewBox="0 0 16 16"><rect x="1" y="1" width="14" height="14" rx="2" fill="#ccc" stroke="#555" /><g fill="none" stroke="#222"><circle cx="8" cy="8" r="6" /><circle cx="8" cy="8" r="3" /><path d="M8 1v14M1 8h14" /></g></svg>
          Polar
        </span>
      </button>
      <button type="button" class:current={detailTab === "Az/El"} on:click={() => (detailTab = "Az/El")}>
        <span>
          <svg viewBox="0 0 16 16"><rect x="1" y="1" width="14" height="14" rx="1" fill="#fff" stroke="#555" /><path d="M3 3v8h11M2 5h3" fill="none" stroke="#c55" /><path d="M6 12L9 4" fill="none" stroke="#36c" /><path d="M7 5L11 12M6 8h4" fill="none" stroke="#c33" /></svg>
          Az/El
        </span>
      </button>
    </div>
    <div class="detail-page">
      <svg class="chart" viewBox="0 0 370 299">
        <path d="M40 259L64 248L88 236L112 223L136 208L155 195L170 188L184 186L199 188L214 195L232 207L247 217L280 236L305 249L329 259Z" fill="#f7e5e5" />
        <path d="M40 39H329V259H40Z" fill="none" stroke="#444" stroke-width="1" />
        {#each [88, 136, 184, 232, 280] as x}
          <path d="M{x} 39v5M{x} 259v-5" stroke="#444" />
        {/each}
        {#each [79, 115, 151, 187, 223] as y}
          <path d="M40 {y}h5M329 {y}h-5" stroke="#444" />
        {/each}
        <path d="M40 259L64 248L88 236L112 223L136 208L155 195L170 188L184 186L199 188L214 195L232 207L247 217L280 236L305 249L329 259" fill="none" stroke="#c11" />
        <path d={curve("40,140 63,137 88,133 112,128 136,121 157,112 184,96 212,79 232,70 257,62 280,57 307,53 329,51")} fill="none" stroke="#11c" />
        <g fill="#11c" text-anchor="end">
          <text x="33" y="50" class="axis-name">Az</text>
          <text x="35" y="83">300°</text>
          <text x="35" y="119">240°</text>
          <text x="35" y="155">180°</text>
          <text x="35" y="191">120°</text>
          <text x="35" y="227">60°</text>
        </g>
        <g fill="#c11">
          <text x="336" y="50" class="axis-name">El</text>
          <text x="334" y="83">75°</text>
          <text x="334" y="119">60°</text>
          <text x="334" y="155">45°</text>
          <text x="334" y="191">30°</text>
          <text x="334" y="227">15°</text>
        </g>
        <g text-anchor="middle">
          <text x="88" y="274">20:58</text>
          <text x="136" y="274">21:01</text>
          <text x="184" y="274">21:03</text>
          <text x="232" y="274">21:06</text>
          <text x="280" y="274">21:08</text>
          <text x="184" y="291" class="axis-name">UTC</text>
        </g>
      </svg>
    </div>
    <div class="actions">
      <button type="button" class="btn">
        <svg viewBox="0 0 16 16"><path d="M4 8V1h7l2 7" fill="#fff" stroke="#444" /><path d="M6 3h4M6 5h5M6 7h5" stroke="#888" /><path d="M3 8h10l2 4v3H1v-3z" fill="#ddd" stroke="#222" /><path d="M2 12h12" stroke="#222" /></svg>
        <span><u>P</u>rint</span>
      </button>
      <button type="button" class="btn">
        <svg viewBox="0 0 16 16"><path d="M1 1h14v14H3l-2-2z" fill="#777" stroke="#333" /><path d="M4 1h8v6H4z" fill="#eee" /><path d="M4 2h8" stroke="#d66" stroke-width="2" /><path d="M5 10h7v5H5z" fill="#ccc" /><path d="M7 11v3" stroke="#333" stroke-width="2" /></svg>
        <span><u>S</u>ave</span>
      </button>
      <button type="button" class="btn focused">
        <svg viewBox="0 0 16 16"><path d="M4 6l6 6M10 6l-6 6" stroke="#111" stroke-width="2.5" /></svg>
        <span><u>C</u>lose</span>
      </button>
    </div>
  </section>
</main>

<style>
  :global(body) {
    margin: 0;
  }

  .desktop {
    position: relative;
    height: 100vh;
    overflow: hidden;
    background: linear-gradient(#6b6b6b 84%, #2f5590 84%, #2f5590 97%, #6b6b6b 97%);
    font-family: "DejaVu Sans", sans-serif;
    font-size: 11px;
    line-height: 13px;
    color: #000;
  }

  button,
  input,
  select {
    font: inherit;
    color: inherit;
    margin: 0;
  }

  button {
    padding: 0;
    border: 0;
    background: none;
    cursor: default;
  }

  svg {
    display: block;
  }

  /* windows */
  .window {
    position: absolute;
    box-sizing: border-box;
    display: flex;
    flex-direction: column;
    overflow: hidden;
    background: #edeceb;
    border: 1px solid #4a4a4a;
    border-top-color: #222;
    border-radius: 3px 3px 0 0;
  }
  .main-window {
    left: 0;
    top: 0;
    bottom: 1px;
    width: 790px;
    border: 0;
  }
  .list-window {
    left: 625px;
    top: 602px;
    right: 1px;
    bottom: 1px;
    border-radius: 0;
  }
  .radio-window {
    left: 790px;
    top: 0;
    right: 1px;
    border-width: 0 1px 1px 2px;
    border-radius: 0;
  }
  .rotator-window {
    left: 664px;
    top: 335px;
    right: 1px;
  }
  .passes-window {
    left: 0;
    top: 560px;
    width: 520px;
    height: 260px;
    border-left: 0;
  }
  .sky-window {
    left: 0;
    top: 809px;
    width: 626px;
    bottom: 1px;
    border-left: 0;
  }
  .details-window {
    left: 625px;
    top: 593px;
    width: 386px;
  }

  .titlebar {
    box-sizing: border-box;
    display: flex;
    flex: none;
    align-items: center;
    gap: 4px;
    height: 22px;
    padding: 0 4px 2px 5px;
    border-bottom: 1px solid #a3a19f;
    box-shadow: inset 0 -1px #f6f6f5, inset 0 1px #fdfdfd;
    background: linear-gradient(#f0f0ef, #e4e3e2 50%, #cfcdcb);
    color: #a5a3a1;
  }
  .titlebar.active {
    border-color: #4a6fa8;
    box-shadow: inset 0 -1px #c9daf0, inset 0 1px #bcd2ee;
    background: linear-gradient(#98b9e2, #83a8d8 50%, #6f97ca);
    color: #fff;
  }
  h1 {
    flex: 1;
    margin: 0;
    font-size: 11px;
    line-height: 14px;
    text-align: center;
    white-space: nowrap;
    text-shadow: 0 1px #fafafa;
  }
  .active h1 {
    text-shadow: 1px 1px 1px #38588c;
  }
  .app-icon {
    width: 16px;
    height: 16px;
  }
  .controls {
    display: flex;
    gap: 2px;
  }
  .controls button {
    box-sizing: border-box;
    width: 24px;
    height: 14px;
    display: grid;
    place-items: center;
    border: 1px solid #c4c2c0;
    border-radius: 2px;
    background: #d6d4d2;
  }
  .active .controls button {
    border-color: #46699c;
    background: linear-gradient(#4b74ac, #6790c6);
  }
  .controls svg {
    width: 10px;
    height: 10px;
    fill: none;
    stroke: #fff;
  }

  /* main window */
  .menubar {
    box-sizing: border-box;
    display: flex;
    flex: none;
    gap: 14px;
    height: 21px;
    padding-left: 10px;
    border-bottom: 1px solid #bfbebc;
    background: linear-gradient(#eeedec, #e2e1e0);
  }
  .tabs {
    display: flex;
    align-items: flex-end;
    position: relative;
    z-index: 1;
  }
  .tabs button {
    box-sizing: border-box;
    display: flex;
    align-items: center;
    justify-content: center;
    border: 1px solid #a09e9c;
    border-bottom: 0;
    border-radius: 3px 3px 0 0;
    background: linear-gradient(#dddbda, #c9c7c5);
  }
  .tabs button.current {
    border-top: 4px solid #6f98d0;
    background: linear-gradient(#fff, #f2f1ef);
    border-left-color: #7590b8;
    border-right-color: #7590b8;
  }
  .module-tabs {
    flex: none;
    height: 25px;
    padding-left: 2px;
  }
  .module-tabs button {
    width: 64px;
    height: 22px;
    margin-right: -1px;
  }
  .module-tabs .current {
    width: 65px;
    height: 26px;
    margin-bottom: -1px;
    padding-bottom: 4px;
  }
  .page {
    flex: 1;
    display: flex;
    flex-direction: column;
    margin: 0 3px 0 2px;
    padding: 0 2px;
    border: 1px solid #a09e9c;
    background: #f2f1ef;
  }
  .toolbar {
    box-sizing: border-box;
    display: flex;
    flex: none;
    align-items: center;
    gap: 8px;
    height: 28px;
    padding: 0 6px 1px 10px;
    border-bottom: 1px solid #bfbebc;
  }
  .toolbar time {
    flex: 1;
  }
  .toolbar svg,
  .single-head svg {
    width: 12px;
    height: 12px;
    fill: #f4f4f4;
    stroke: #666;
  }
  .toolbar .mark,
  .single-head .mark {
    fill: #555;
    stroke: none;
  }
  .toolbar .cross {
    stroke: #444;
    stroke-width: 2;
  }
  .hot {
    box-sizing: border-box;
    width: 22px;
    height: 22px;
    display: grid;
    place-items: center;
    border: 1px solid #86a0c4;
    border-radius: 3px;
    background: #dde3ec;
  }
  .map {
    flex: none;
    width: 100%;
    overflow: visible;
  }
  .grid {
    fill: none;
    stroke: #a0a0a0;
    stroke-opacity: 0.28;
  }
  .grid-labels {
    fill: #999;
    opacity: 0.5;
  }
  .track {
    fill: none;
    stroke: #0ee;
    stroke-width: 1.3;
  }
  .footprint {
    fill: none;
    stroke: #f2e900;
    stroke-width: 1.2;
  }
  .gutter {
    flex: none;
    height: 6px;
    display: grid;
    place-items: center;
  }
  .gutter i {
    width: 47px;
    height: 5px;
    background: conic-gradient(#9a9896 25%, transparent 25%) 0 0 / 3px 2px;
    opacity: 0.7;
  }
  .lower {
    flex: 1;
    display: flex;
    gap: 6px;
    min-height: 0;
  }
  .polar {
    flex: none;
    width: 410px;
    height: 280px;
    background: #fff;
  }
  .rings {
    fill: none;
    stroke: #8c8c8c;
  }
  .rings path {
    stroke: #bdbdbd;
    stroke-width: 2;
  }
  .navy {
    fill: #000080;
  }
  .compass {
    fill: #008000;
    text-anchor: middle;
  }
  .single {
    flex: 1;
    background: #edeceb;
  }
  .single-head {
    display: flex;
    align-items: center;
    gap: 16px;
    height: 24px;
    padding-left: 6px;
  }
  dl {
    box-sizing: border-box;
    display: grid;
    grid-template-columns: 93px 1fr;
    grid-auto-rows: 13px;
    height: 252px;
    margin: 0;
    padding-top: 5px;
    border: 1px solid #a09e9c;
    white-space: nowrap;
    overflow: hidden;
  }
  dt {
    text-align: right;
  }
  dd {
    margin: 0;
  }
  dd::before {
    content: ":";
    display: inline-block;
    width: 8px;
    padding-left: 4px;
    visibility: hidden;
  }
  .named::before {
    visibility: visible;
  }
  .azel {
    margin-top: 6px;
    border-top: 2px solid #7c7a78;
    background: #fff;
  }
  table {
    width: 100%;
    border-collapse: collapse;
    table-layout: fixed;
  }
  td {
    box-sizing: border-box;
    height: 19px;
    padding: 0 4px;
    color: #1a1a1a;
    white-space: nowrap;
  }
  tbody tr:nth-child(even) {
    background: #eee;
  }
  .blank {
    width: 103px;
  }
  .az {
    width: 53px;
  }
  .sorted {
    background: #ededed;
  }
  tr:nth-child(even) .sorted {
    background: #dcdcdc;
  }

  /* lists */
  .scroller {
    flex: 1;
    display: flex;
    gap: 3px;
    min-height: 0;
    overflow: hidden;
  }
  .list {
    flex: 1;
    align-self: flex-start;
    background: #fff;
  }
  .list th {
    box-sizing: border-box;
    height: 21px;
    padding: 0;
    font-weight: normal;
    border-bottom: 1px solid #a8a6a4;
    background: linear-gradient(#f7f6f6, #dfdddc);
    box-shadow: inset -1px 0 #bbb9b7;
  }
  .list th:last-child {
    box-shadow: none;
  }
  .list .selected {
    background: linear-gradient(#82a7d8, #5f87bf);
  }
  .list .selected td {
    color: #fff;
  }
  .list-window .scroller {
    padding: 0 3px 2px 1px;
  }
  .sat-list th {
    height: 22px;
  }
  .sat-list th:nth-child(6) {
    padding-right: 14px;
  }
  .sat-list td {
    padding: 0 5px;
  }
  .sat-list td:first-child {
    text-align: center;
  }
  .sat-list td:last-child {
    text-align: right;
  }
  .sat-list th:nth-child(n + 7) {
    text-align: left;
    padding-left: 8px;
  }
  .w-dir { width: 42px; }
  .w-num { width: 62px; }
  .w-mag { width: 52px; }
  .w-event { width: 159px; }
  .w-lat { width: 53px; }
  .w-lon { width: 61px; }
  .w-ssp { width: 58px; }
  .w-alt { width: 43px; }

  .passes-window .scroller {
    padding: 2px 4px 0;
  }
  .pass-list td:nth-child(n + 3) {
    text-align: right;
  }
  .pass-list td:last-child {
    text-align: center;
  }
  .p-date { width: 126px; }
  .p-dur { width: 58px; }
  .p-max { width: 45px; }
  .p-az { width: 53px; }

  .scrollbar {
    box-sizing: border-box;
    flex: none;
    display: flex;
    flex-direction: column;
    width: 15px;
    border: 1px solid #a3a19f;
    border-radius: 3px;
    background: #d3d1d0;
  }
  .scrollbar .arrow {
    flex: none;
    height: 14px;
    display: grid;
    place-items: center;
    border-bottom: 1px solid #a3a19f;
    background: #f4f4f3;
  }
  .scrollbar .last {
    border-top: 1px solid #a3a19f;
    border-bottom: 0;
  }
  .scrollbar .arrow svg {
    width: 8px;
    height: 8px;
    fill: none;
    stroke: #333;
  }
  .scrollbar .dim svg {
    stroke: #bbb;
  }
  .thumb {
    flex: none;
    height: 134px;
    display: grid;
    place-items: center;
    border-bottom: 1px solid #5579ae;
    background: linear-gradient(90deg, #9bbce8, #7ea5d8);
  }
  .list-window .thumb {
    height: 255px;
  }
  .thumb i {
    width: 5px;
    height: 7px;
    background: repeating-linear-gradient(#5579ae 0 1px, transparent 1px 3px);
  }
  .trough {
    flex: 1;
  }

  /* form parts */
  fieldset {
    box-sizing: border-box;
    min-width: 0;
    margin: 0;
    padding: 0;
    border: 1px solid #a8a6a4;
    border-radius: 3px;
  }
  legend {
    height: 14px;
    margin-left: 3px;
    padding: 0 1px;
    line-height: 14px;
  }
  legend.middle {
    margin: 0 auto;
    padding: 0 4px;
    font-weight: bold;
  }
  .btn {
    box-sizing: border-box;
    display: flex;
    align-items: center;
    justify-content: center;
    height: 25px;
    border: 1px solid #999694;
    border-radius: 3px;
    background: linear-gradient(#fff, #f6f5f5 50%, #ebeae9);
    white-space: nowrap;
  }
  .btn.pressed {
    padding-left: 2px;
    background: linear-gradient(#c9c5c3, #d0cdca 40%, #c5c1be);
  }
  .btn.focused {
    border-color: #7192c2;
    box-shadow: inset 0 0 0 1px #a9c0e0;
  }
  .combo {
    position: relative;
    display: block;
  }
  .combo select {
    box-sizing: border-box;
    display: block;
    width: 100%;
    height: 25px;
    padding: 0 0 2px 5px;
    appearance: none;
    border: 1px solid #999694;
    border-radius: 3px;
    background: linear-gradient(#fff, #f6f5f5 50%, #ebeae9);
  }
  .combo svg {
    position: absolute;
    right: 7px;
    top: 4px;
    width: 8px;
    height: 16px;
    padding-left: 4px;
    border-left: 1px solid #bbb;
    fill: none;
    stroke: #222;
    pointer-events: none;
  }
  .spin {
    box-sizing: border-box;
    display: flex;
    height: 21px;
    border: 1px solid #85827f;
    border-radius: 3px;
    overflow: hidden;
  }
  .spin input {
    box-sizing: border-box;
    flex: 1;
    min-width: 0;
    padding: 0 3px;
    border: 0;
    background: #fff;
  }
  .steps {
    display: flex;
    flex-direction: column;
    width: 11px;
    border-left: 1px solid #85827f;
    background: #f0efee;
  }
  .steps button {
    flex: 1;
    display: grid;
    place-items: center;
  }
  .steps button + button {
    border-top: 1px solid #b5b3b1;
  }
  .steps svg {
    width: 6px;
    height: 4px;
    fill: none;
    stroke: #333;
  }
  .dial {
    display: flex;
    padding: 5px 0 0 1px;
    font-size: 19px;
    line-height: 33px;
  }
  .cell {
    display: flex;
    flex-direction: column;
    align-items: center;
    width: 18px;
  }
  .cell b {
    height: 33px;
    font-weight: normal;
    white-space: pre;
  }
  .cell button {
    height: 14px;
  }
  .cell svg {
    width: 12px;
    height: 12px;
  }
  .cell .open {
    display: none;
  }
  .dot {
    width: 6px;
    padding-top: 14px;
  }
  .unit {
    padding: 14px 0 0 7px;
  }

  /* radio */
  .radio-body {
    display: grid;
    grid-template-columns: 1fr 1fr;
    gap: 5px 6px;
    padding: 10px 14px 12px 13px;
  }
  .doppler {
    display: flex;
    gap: 8px;
    padding: 11px 1px 0;
    line-height: 14px;
  }
  .lo {
    margin-left: auto;
  }
  .tuned {
    display: flex;
    align-items: center;
    gap: 11px;
    padding: 5px 0 2px 8px;
    line-height: 20px;
  }
  .tuned strong {
    font-size: 13px;
  }
  .tuned output {
    font-size: 19px;
    white-space: nowrap;
  }
  .target {
    display: grid;
    grid-template-columns: 1fr 33px 33px;
    gap: 7px 8px;
    padding: 6px 6px 0 7px;
  }
  .wide {
    grid-column: span 2;
  }
  .readout {
    display: grid;
    grid-template-columns: 27px 57px 54px 1fr;
    padding: 3px 0 3px 1px;
    line-height: 18px;
    text-align: right;
  }
  .readout span:nth-child(4n) {
    padding-left: 6px;
    text-align: left;
  }
  .settings {
    display: grid;
    grid-template-columns: 65px 82px 1fr;
    align-items: center;
    gap: 8px 7px;
    padding: 7px 6px 0 0;
  }
  .settings label,
  .rot-settings label {
    text-align: right;
  }
  .settings .spin {
    margin-top: 4px;
  }
  .status {
    grid-column: span 2;
    margin: 1px 0 0;
    border: 1px solid #a8a6a4;
    font-size: 19px;
    font-weight: bold;
    line-height: 25px;
    text-align: center;
  }

  /* rotator */
  .rotator-body {
    display: grid;
    grid-template-columns: 170px 210px 1fr;
    gap: 1px;
    padding: 10px 14px 13px 13px;
  }
  .axis {
    height: 119px;
  }
  .axis .dial {
    padding: 7px 0 0 11px;
    line-height: 30px;
  }
  .axis .cell {
    width: 27px;
  }
  .axis .cell button {
    height: 20px;
  }
  .axis .cell b {
    height: 30px;
  }
  .axis .solid {
    display: none;
  }
  .axis .open {
    display: block;
    fill: none;
    stroke: #000;
    stroke-width: 1.5;
  }
  .axis .dot {
    padding-top: 20px;
  }
  .axis .unit {
    padding: 20px 0 0;
  }
  .read {
    display: flex;
    gap: 20px;
    padding: 9px 0 0 16px;
  }
  .rot-target {
    display: grid;
    grid-template-columns: 1fr 48px;
    gap: 8px;
    padding: 5px 6px 0 7px;
  }
  .rot-readout {
    display: grid;
    grid-template-columns: 38px 69px;
    padding-top: 4px;
    line-height: 18px;
    text-align: right;
  }
  .rot-settings {
    display: grid;
    grid-template-columns: 63px 73px 1fr;
    align-items: center;
    gap: 7px;
    padding: 4px 6px 6px 0;
  }
  .rot-polar {
    box-sizing: border-box;
    grid-column: 3;
    grid-row: 1 / span 2;
    width: 100%;
    height: 227px;
    border: 1px solid #a8a6a4;
    background: #fff;
  }
  .times {
    font-size: 9px;
    fill: #22f;
    text-anchor: middle;
  }

  .sky {
    width: 600px;
    margin: 11px 12px;
  }
  .utc,
  .axis-name {
    font-size: 12px;
  }

  /* pass details */
  .detail-tabs {
    height: 30px;
    padding-left: 5px;
  }
  .detail-tabs button {
    justify-content: flex-start;
    width: 66px;
    height: 25px;
    margin-right: -1px;
    padding-left: 4px;
  }
  .detail-tabs .current {
    height: 28px;
    margin-bottom: -1px;
    padding: 0 3px 2px 2px;
  }
  .detail-tabs span {
    display: flex;
    align-items: center;
    gap: 5px;
  }
  .detail-tabs .current span {
    flex: 1;
    gap: 4px;
    height: 18px;
    padding-left: 2px;
    border: 1px solid #8fa6c6;
    border-radius: 2px;
    background: #e3e9f2;
  }
  .detail-tabs svg,
  .actions svg {
    width: 16px;
    height: 16px;
  }
  .detail-page {
    margin: 0 5px;
    padding: 3px 1px 1px;
    border: 1px solid #a09e9c;
    border-radius: 0 3px 3px 3px;
    background: #f8f8f7;
  }
  .chart {
    width: 100%;
    background: #fff;
  }
  .actions {
    display: flex;
    justify-content: flex-end;
    gap: 7px;
    padding: 8px 11px 10px;
  }
  .actions .btn {
    gap: 5px;
    width: 84px;
    height: 31px;
  }
</style>
